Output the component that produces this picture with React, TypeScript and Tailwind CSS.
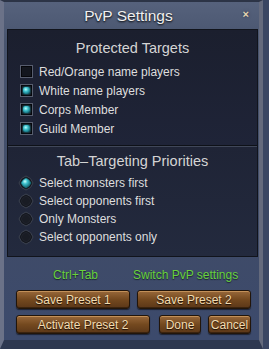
import React from "react";

const Check = ({ checked }: { checked: boolean }) => (
  <div className="w-[13px] h-[13px] border border-[#575d6e] bg-[#13161e] shadow-[inset_0_0_0_1px_#05060a] flex items-center justify-center shrink-0">
    {checked && (
      <div className="w-[7px] h-[7px] rounded-[2px] bg-[radial-gradient(circle_at_40%_35%,#b8ffff_0%,#3cc0cc_35%,#0c5a68_85%)] shadow-[0_0_2px_#2aa6b4]" />
    )}
  </div>
);

const Radio = ({ checked }: { checked: boolean }) => (
  <svg width="16" height="16" viewBox="0 0 16 16" className="shrink-0">
    <defs>
      <radialGradient id="gem" cx="0.4" cy="0.35" r="0.7">
        <stop offset="0" stopColor="#c8ffff" />
        <stop offset="0.35" stopColor="#3cc0cc" />
        <stop offset="1" stopColor="#0a4e5c" />
      </radialGradient>
    </defs>
    <polygon
      points="8,1 12.5,3.5 15,8 12.5,12.5 8,15 3.5,12.5 1,8 3.5,3.5"
      fill="#14171e"
      stroke="#3c4250"
      strokeWidth="1"
    />
    <polygon
      points="8,3 11,5 13,8 11,11 8,13 5,11 3,8 5,5"
      fill={checked ? "url(#gem)" : "#191c24"}
      stroke={checked ? "#1a7c88" : "#262a34"}
      strokeWidth="0.6"
    />
  </svg>
);

const Btn = ({ className, children }: { className: string; children: React.ReactNode }) => (
  <div
    className={
      "h-[19px] flex items-center justify-center rounded-[3px] border border-[#22150a] bg-[linear-gradient(#98683a,#74491f_50%,#5b3718)] shadow-[inset_0_1px_0_#c39058,inset_0_-1px_0_#3a230f,0_1px_1px_#1c2233] text-[12px] leading-none text-[#f2dcb2] [text-shadow:0_1px_1px_#1a0d04] " +
      className
    }
  >
    {children}
  </div>
);

const CheckRow = ({ checked, label }: { checked: boolean; label: string }) => (
  <div className="h-[19px] flex items-center pl-[12px]">
    <Check checked={checked} />
    <span className="ml-[6px] text-[12px] text-[#dedede] leading-none">{label}</span>
  </div>
);

const RadioRow = ({ checked, label }: { checked: boolean; label: string }) => (
  <div className="h-[18px] flex items-center pl-[10px]">
    <Radio checked={checked} />
    <span className="ml-[5px] text-[12px] text-[#dedede] leading-none">{label}</span>
  </div>
);

export default function App() {
  return (
    <div className="w-[269px] h-[349px] overflow-hidden bg-[#3a4662] font-['Liberation_Sans',Arial,sans-serif] flex">
      <div className="w-[263px] h-[349px] flex flex-col bg-[linear-gradient(#56627c,#48546e_12%,#3f4b68_70%,#3c4a6c)] border-l-[4px] border-l-[#6b7288] border-r-[4px] border-r-[#646a7c] border-t-[2px] border-t-[#2c3446] border-b-[9px] border-b-[#2e3850] relative">
        {/* title bar */}
        <div className="h-[27px] flex items-center justify-center relative">
          <span className="text-[15.5px] text-[#f0f0f0] [text-shadow:0_1px_2px_#000] mt-[1px] ml-[-6px]">PvP Settings</span>
          <span className="absolute right-[10px] top-[7px] text-[11px] leading-none text-[#e4d6b0] [text-shadow:0_0_3px_#2a3048] font-bold">×</span>
        </div>
        {/* panel */}
        <div className="ml-[3px] w-[251px] h-[228px] border border-[#11141c] shadow-[inset_0_0_0_1px_#343a4b] bg-[#1e2232] flex flex-col">
          <div className="h-[115px] flex flex-col bg-[linear-gradient(#1b1f2e,#1f2438)]">
            <div className="pt-[10px] h-[32px] text-center text-[14.5px] leading-[17px] text-[#d4d4d4]">Protected Targets</div>
            <CheckRow checked={false} label="Red/Orange name players" />
            <CheckRow checked={true} label="White name players" />
            <CheckRow checked={true} label="Corps Member" />
            <CheckRow checked={true} label="Guild Member" />
          </div>
          <div className="h-px bg-[#0e1118]" />
          <div className="h-px bg-[#404759]" />
          <div className="flex-1 flex flex-col bg-[linear-gradient(#1f2436,#232a3e)]">
            <div className="pt-[6px] h-[27px] text-center text-[14.5px] leading-[17px] text-[#d4d4d4]">Tab–Targeting Priorities</div>
            <RadioRow checked={true} label="Select monsters first" />
            <RadioRow checked={false} label="Select opponents first" />
            <RadioRow checked={false} label="Only Monsters" />
            <RadioRow checked={false} label="Select opponents only" />
          </div>
        </div>
        {/* shortcut row */}
        <div className="h-[33px] pt-[3px] flex items-center text-[12px] text-[#68d23c] [text-shadow:0_1px_1px_#1a2030]">
          <span className="ml-[49px]">Ctrl+Tab</span>
          <span className="ml-[35px]">Switch PvP settings</span>
        </div>
        {/* buttons */}
        <div className="pl-[12px] flex flex-col gap-[6px]">
          <div className="flex gap-[7px]">
            <Btn className="w-[114px]">Save Preset 1</Btn>
            <Btn className="w-[114px]">Save Preset 2</Btn>
          </div>
          <div className="flex">
            <Btn className="w-[134px]">Activate Preset 2</Btn>
            <Btn className="w-[42px] ml-[9px]">Done</Btn>
            <Btn className="w-[43px] ml-[7px]">Cancel</Btn>
          </div>
        </div>
      </div>
    </div>
  );
}
